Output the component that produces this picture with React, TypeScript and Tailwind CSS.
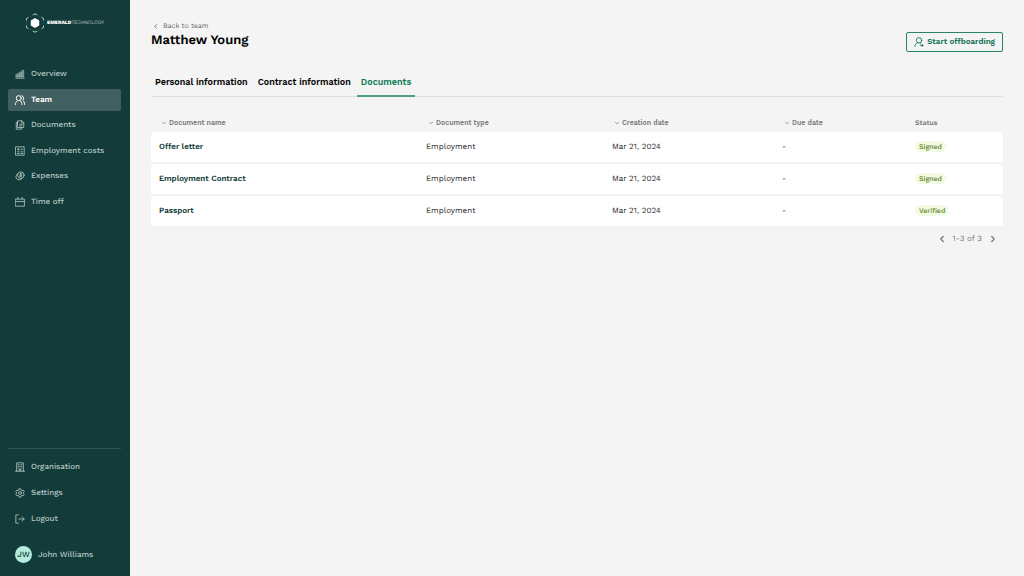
import React, { useState } from "react";
import clsx from "clsx";
import { ChevronDown, ChevronLeft, ChevronRight } from "lucide-react";

interface IconProps {
  children: React.ReactNode;
  className?: string;
}

const Icon: React.FC<IconProps> = ({ children, className }) => (
  <svg
    viewBox="0 0 24 24"
    fill="none"
    stroke="currentColor"
    strokeWidth={2}
    strokeLinecap="round"
    strokeLinejoin="round"
    aria-hidden="true"
    className={clsx("size-2.5 shrink-0", className)}
  >
    {children}
  </svg>
);

const ChartIcon = (
  <Icon>
    <path d="M2 22h20" />
    <path
      d="M3 13h3.5v6H3zM8 10h3.5v9H8zM13 7h3.5v12H13zM18 3h3v16h-3z"
      fill="currentColor"
      fillOpacity={0.5}
      strokeWidth={1.4}
    />
  </Icon>
);

const TeamIcon = (
  <Icon>
    <circle cx="9" cy="7.5" r="6" strokeWidth={2.4} />
    <path d="M1 23c0-4 1.5-7 5-9.500M12 13.500c3 2 4.500 5 4.500 9.500" strokeWidth={2.4} />
    <path d="M16 1.800a6 6 0 0 1 2 11c3.500 2 5 5 5 10" strokeWidth={2.4} />
  </Icon>
);

const DocumentsIcon = (
  <Icon>
    <path d="M7 2h10l4 4v12H7z" />
    <path d="M16 2v5h5M7 6H3v16h13v-4M11 10h6M11 14h6" />
  </Icon>
);

const CostsIcon = (
  <Icon>
    <path d="M2 2h20v20H2z" />
    <path d="M6 8h4M8 6v4M14 8h4M6 14h4M6 18h4M14 14h4M14 18h4" />
  </Icon>
);

const ExpensesIcon = (
  <Icon>
    <circle cx="14" cy="10" r="8" />
    <path d="M6 7c-4 3-5 8-2 12 3 3 8 3 12 0" />
    <path d="M17 7c-2-2-6-1-5.500 1s5 1.500 5 3.500-4 2.500-6 .5M14 5v10" />
  </Icon>
);

const CalendarIcon = (
  <Icon>
    <path d="M1.500 5h21v17h-21zM1.500 11h21M7 1v4M17 1v4" />
  </Icon>
);

const BuildingIcon = (
  <Icon>
    <path d="M4 22V2h16v20M1 22h22M10 22v-4h4v4" />
    <path d="M8 6v1M12 6v1M16 6v1M8 10v1M12 10v1M16 10v1M8 14v1M12 14v1M16 14v1" />
  </Icon>
);

const SettingsIcon = (
  <Icon>
    <path d="M10 2h4l.8 3.200 2.200 1.300 3.200-1 2 3.500-2.400 2.300v1.400l2.400 2.300-2 3.500-3.200-1-2.200 1.300L14 22h-4l-.8-3.200L7 17.500l-3.200 1-2-3.500 2.400-2.300v-1.400L1.800 9l2-3.500 3.200 1 2.200-1.300z" />
    <circle cx="12" cy="12" r="3.500" />
  </Icon>
);

const LogoutIcon = (
  <Icon>
    <path d="M8 2H2v20h6M9 12h13M17 7l5 5-5 5" />
  </Icon>
);

const OffboardIcon = (
  <Icon>
    <circle cx="12" cy="8" r="6.500" />
    <path d="M2 23c0-4 2-7 6-9M14.500 14c1 .5 1.500 1 2 1.500" />
    <path d="M15 20h7M19 17l3 3-3 3" />
  </Icon>
);

const Logo = () => (
  <div className="flex items-center gap-0.5 pl-[17px] text-white">
    <svg viewBox="0 0 40 40" className="size-5 shrink-0" aria-hidden="true">
      <path d="M20 12l7 4v8l-7 4-7-4v-8z" fill="#fff" stroke="#fff" strokeWidth="3" strokeLinejoin="round" />
      <path
        d="M15.500 4l4.500-2.500L24.500 4M15.500 36l4.500 2.500 4.500-2.500M3 15v-4l4-2.500M37 15v-4l-4-2.500M3 25v4l4 2.500M37 25v4l-4 2.500"
        fill="none"
        stroke="#a9d3ca"
        strokeWidth="2"
      />
      <path
        d="M13 6l-3 1.500M27 6l3 1.500M13 34l-3-1.500M27 34l3-1.500M3 18v4M37 18v4"
        stroke="#a9d3ca"
        strokeWidth="1"
        strokeOpacity=".3"
      />
    </svg>
    <span className="text-[5px] leading-none whitespace-nowrap">
      <b className="font-extrabold">EMERALD</b>
      <span className="font-light">TECHNOLOGY</span>
    </span>
  </div>
);

const mainLinks = [
  { label: "Overview", icon: ChartIcon },
  { label: "Team", icon: TeamIcon },
  { label: "Documents", icon: DocumentsIcon },
  { label: "Employment costs", icon: CostsIcon },
  { label: "Expenses", icon: ExpensesIcon },
  { label: "Time off", icon: CalendarIcon },
];

const accountLinks = [
  { label: "Organisation", icon: BuildingIcon },
  { label: "Settings", icon: SettingsIcon },
  { label: "Logout", icon: LogoutIcon },
];

interface NavLinkProps {
  label: string;
  icon: React.ReactNode;
  active?: boolean;
}

const NavLink: React.FC<NavLinkProps> = ({ label, icon, active }) => (
  <a
    href="#"
    aria-current={active ? "page" : undefined}
    className={clsx(
      "flex h-[22px] items-center gap-1.5 rounded-xs px-[7px] text-[8px] whitespace-nowrap",
      active ? "bg-[#415f5f] font-semibold text-white" : "font-medium text-[#b5c8c4]",
    )}
  >
    {icon}
    {label}
  </a>
);

const Sidebar = () => (
  <aside className="flex w-[130px] shrink-0 flex-col bg-[#123b39] pt-[13px] pr-[9px] pb-[13px] pl-2">
    <Logo />
    <nav aria-label="Main" className="mt-[30px] flex h-[150px] flex-col justify-between">
      {mainLinks.map((link) => (
        <NavLink key={link.label} {...link} active={link.label === "Team"} />
      ))}
    </nav>
    <nav aria-label="Account" className="mt-auto flex flex-col gap-1 border-t border-[#2f5552] pt-[7px]">
      {accountLinks.map((link) => (
        <NavLink key={link.label} {...link} />
      ))}
    </nav>
    <div className="mt-4 flex items-center gap-1.5 pl-[7px] text-[8px] font-medium text-[#b5c8c4]">
      <span className="flex size-[17px] items-center justify-center rounded-full bg-[#b4ebdd] text-[8px] text-[#123b39]">
        JW
      </span>
      John Williams
    </div>
  </aside>
);

const tabs = ["Personal information", "Contract information", "Documents"];

const columns = [
  { label: "Document name", width: "w-[267px]", sortable: true },
  { label: "Document type", width: "w-[186px]", sortable: true },
  { label: "Creation date", width: "w-[170px]", sortable: true },
  { label: "Due date", width: "w-[133px]", sortable: true },
  { label: "Status", width: "w-24", sortable: false },
];

const documents = [
  { name: "Offer letter", type: "Employment", created: "Mar 21, 2024", due: "-", status: "Signed" },
  { name: "Employment Contract", type: "Employment", created: "Mar 21, 2024", due: "-", status: "Signed" },
  { name: "Passport", type: "Employment", created: "Mar 21, 2024", due: "-", status: "Verified" },
];

const DocumentsTable = () => (
  <table className="mt-4 w-full table-fixed border-separate border-spacing-0 text-left text-[8px]">
    <thead>
      <tr>
        {columns.map((col) => (
          <th key={col.label} scope="col" className={clsx("h-[19px] p-0 pl-2 text-[7px] font-semibold text-[#7b7b7b]", col.width)}>
            {col.sortable ? (
              <button type="button" className="flex items-center gap-0.5 pl-0.5">
                <ChevronDown size={6} strokeWidth={3} />
                {col.label}
              </button>
            ) : (
              col.label
            )}
          </th>
        ))}
      </tr>
    </thead>
    <tbody>
      {documents.map((doc) => (
        <tr key={doc.name} className="text-[#1f1f1f] *:h-8 *:border-b-2 *:border-[#f4f4f4] *:bg-white *:p-0 *:pl-2">
          <td className="rounded-l-sm font-semibold text-[#123b39]">{doc.name}</td>
          <td>{doc.type}</td>
          <td>{doc.created}</td>
          <td>{doc.due}</td>
          <td className="rounded-r-sm">
            <span className="inline-block rounded-full bg-[#f3fbe3] px-1 text-[7px] leading-[11px] font-medium text-[#5b7d1c]">
              {doc.status}
            </span>
          </td>
        </tr>
      ))}
    </tbody>
  </table>
);

export default function App() {
  const [activeTab, setActiveTab] = useState("Documents");

  return (
    <div className="flex min-h-screen bg-[#f4f4f4] font-['Work_Sans','Inter',sans-serif] leading-3 antialiased [text-rendering:geometricPrecision]">
      <Sidebar />
      <main className="min-w-0 flex-1 px-[21px] pt-5">
        <header className="flex items-start justify-between">
          <div>
            <a href="#" className="flex h-3 items-center gap-1 pl-px text-[7px] text-[#666]">
              <ChevronLeft size={7} strokeWidth={3} />
              Back to team
            </a>
            <h1 className="text-[13px] leading-[18px] font-semibold text-black">Matthew Young</h1>
          </div>
          <button
            type="button"
            className="mt-3 flex h-5 items-center gap-[3px] rounded-xs border border-[#2c8264] px-[7px] text-[8px] font-semibold text-[#0b6e4f]"
          >
            {OffboardIcon}
            Start offboarding
          </button>
        </header>

        <div role="tablist" className="mt-4 flex gap-0.5 border-b border-[#dedede]">
          {tabs.map((tab) => (
            <button
              key={tab}
              type="button"
              role="tab"
              aria-selected={tab === activeTab}
              onClick={() => setActiveTab(tab)}
              className={clsx(
                "-mb-px h-[29px] border-b-2 px-1 text-[9px] font-semibold",
                tab === activeTab ? "border-[#4da084] text-[#0b7a55]" : "border-transparent text-black",
              )}
            >
              {tab}
            </button>
          ))}
        </div>

        <DocumentsTable />

        <div className="mt-[5px] flex items-center justify-end gap-1.5 pr-[5px] text-[8px] text-[#777]">
          <button type="button" aria-label="Previous page">
            <ChevronLeft size={10} strokeWidth={3} />
          </button>
          <span>1-3 of 3</span>
          <button type="button" aria-label="Next page">
            <ChevronRight size={10} strokeWidth={3} />
          </button>
        </div>
      </main>
    </div>
  );
}
